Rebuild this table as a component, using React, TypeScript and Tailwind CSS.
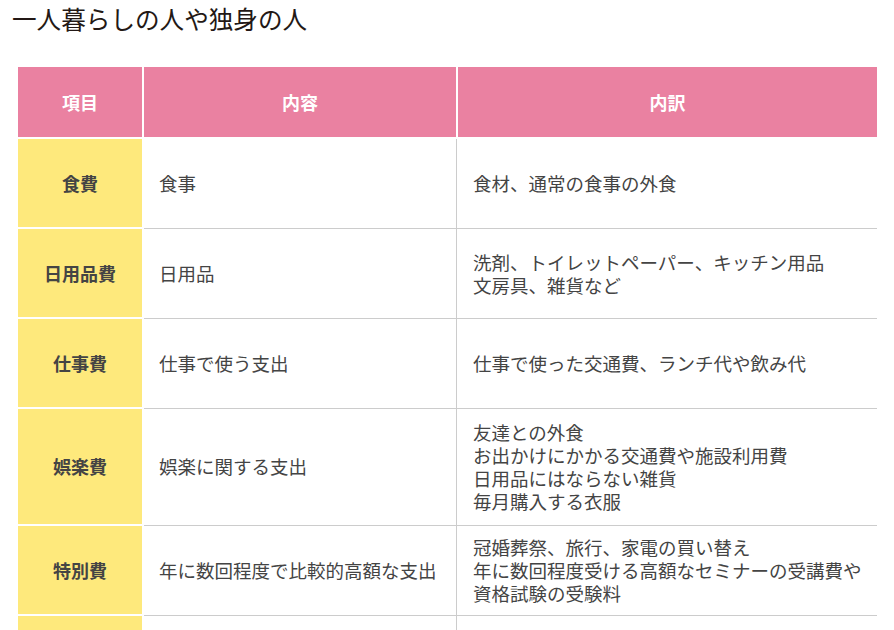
import React from "react";

const font = { fontFamily: '"Noto Sans CJK JP", "Noto Sans", sans-serif' };

type Row = { item: string; content: string; detail: string[]; h: string };

const rows: Row[] = [
  { item: "食費", content: "食事", detail: ["食材、通常の食事の外食"], h: "h-[90px]" },
  { item: "日用品費", content: "日用品", detail: ["洗剤、トイレットペーパー、キッチン用品", "文房具、雑貨など"], h: "h-[90px]" },
  { item: "仕事費", content: "仕事で使う支出", detail: ["仕事で使った交通費、ランチ代や飲み代"], h: "h-[90px]" },
  {
    item: "娯楽費",
    content: "娯楽に関する支出",
    detail: ["友達との外食", "お出かけにかかる交通費や施設利用費", "日用品にはならない雑貨", "毎月購入する衣服"],
    h: "h-[117px]",
  },
  {
    item: "特別費",
    content: "年に数回程度で比較的高額な支出",
    detail: ["冠婚葬祭、旅行、家電の買い替え", "年に数回程度受ける高額なセミナーの受講費や", "資格試験の受験料"],
    h: "h-[90px]",
  },
  { item: "", content: "", detail: [""], h: "h-[90px]" },
];

export default function App() {
  return (
    <div className="w-[894px] h-[630px] overflow-hidden bg-white" style={font}>
      <h1 className="pl-[12px] pt-[3px] text-[24.6px] leading-[30px] text-[#231815] font-normal">
        一人暮らしの人や独身の人
      </h1>
      <div className="ml-[18px] mt-[34px] w-[859px]">
        <div className="flex h-[72px] border-b-2 border-white">
          <div className="w-[124px] bg-[#ea81a1] text-white font-bold text-[18px] flex items-center justify-center">
            項目
          </div>
          <div className="w-[312px] ml-[2px] bg-[#ea81a1] text-white font-bold text-[18px] flex items-center justify-center">
            内容
          </div>
          <div className="flex-1 ml-[2px] bg-[#ea81a1] text-white font-bold text-[18px] flex items-center justify-center">
            内訳
          </div>
        </div>
        {rows.map((r, i) => (
          <div key={i} className={`flex ${r.h}`}>
            <div className="w-[124px] bg-[#fee97c] border-b-2 border-white flex items-center justify-center text-[18px] font-bold text-[#444]">
              {r.item}
            </div>
            <div className="w-[312px] ml-[2px] border-b border-[#cccccc] flex items-center pl-[15px] text-[18.5px] text-[#444]">
              {r.content}
            </div>
            <div className="flex-1 border-l border-b border-[#cccccc] flex flex-col justify-center pl-[16px] text-[18.5px] leading-[23px] text-[#444]">
              {r.detail.map((d, j) => (
                <div key={j}>{d}</div>
              ))}
            </div>
          </div>
        ))}
      </div>
    </div>
  );
}
